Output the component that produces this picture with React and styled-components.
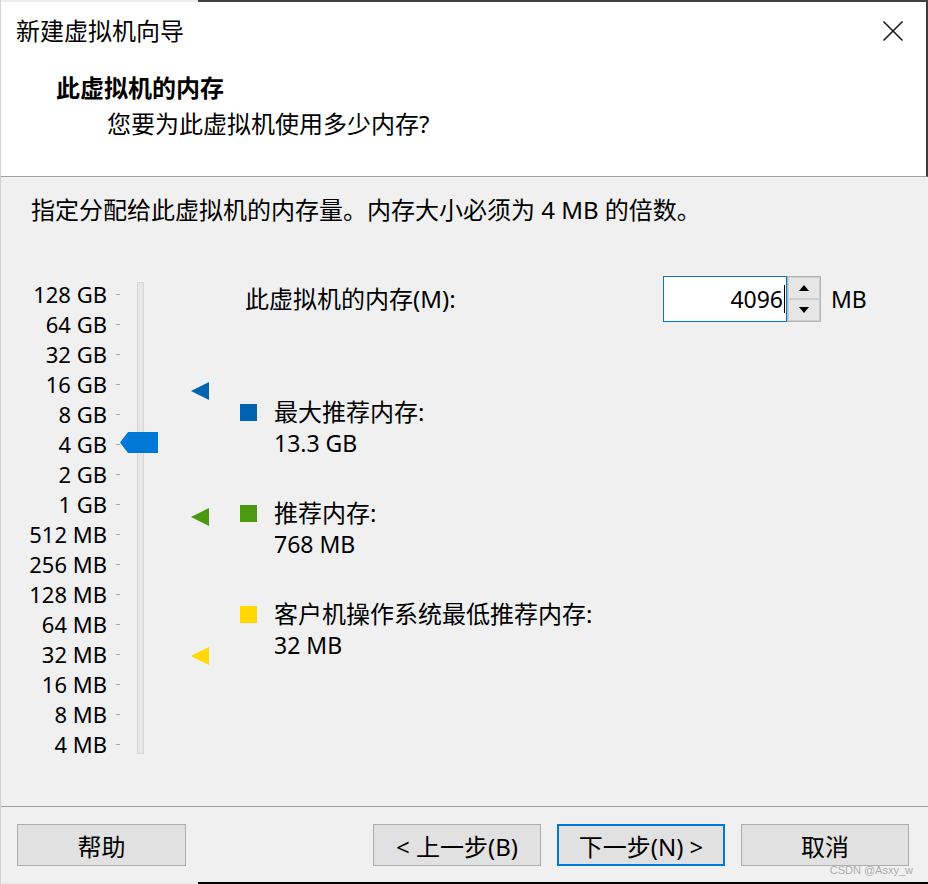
import React from "react";
import styled, { createGlobalStyle } from "styled-components";

const Global = createGlobalStyle`
  html, body { margin: 0; padding: 0; background: #f0f0f0; }
  body {
    font-family: "Noto Sans", "Noto Sans CJK SC", sans-serif;
    color: #000;
  }
`;

const Window = styled.div`
  position: relative;
  width: 928px;
  height: 884px;
  box-sizing: border-box;
  border-left: 1px solid #d2d2d2;
  background: #f0f0f0;
  display: flex;
  flex-direction: column;
  overflow: hidden;
`;

const EdgeStrip = styled.div`
  display: flex;
  height: 2px;
  flex: none;
`;

const EdgeLight = styled.div`
  width: 197px;
  background: #ececec;
`;

const EdgeDark = styled.div`
  flex: 1;
  background: ${(p) => p.$color};
`;

const Header = styled.header`
  height: 174px;
  flex: none;
  background: #fff;
  border-bottom: 1px solid #a0a0a0;
  border-right: 2px solid #3c3c3c;
  display: flex;
  flex-direction: column;
`;

const TitleBar = styled.div`
  height: 58px;
  display: flex;
  align-items: center;
  justify-content: space-between;
  padding: 0 21px 0 15px;
`;

const Title = styled.div`
  font-size: 24px;
  line-height: 30px;
`;

const CloseButton = styled.div`
  width: 24px;
  height: 24px;
  display: flex;
  align-items: center;
  justify-content: center;
`;

const Heading = styled.div`
  margin-top: 13px;
  padding-left: 55px;
  font-size: 24px;
  line-height: 30px;
  font-weight: 700;
`;

const SubHeading = styled.div`
  margin-top: 6px;
  padding-left: 106px;
  font-size: 24px;
  line-height: 30px;
`;

const Body = styled.main`
  height: 629px;
  flex: none;
  display: flex;
  flex-direction: column;
`;

const Intro = styled.div`
  margin-top: 18px;
  padding-left: 30px;
  font-size: 24px;
  line-height: 30px;
`;

const MainArea = styled.div`
  margin-top: 51px;
  display: flex;
  align-items: flex-start;
`;

const SliderArea = styled.div`
  position: relative;
  display: flex;
  align-items: flex-start;
  padding-top: 3px;
`;

const Labels = styled.div`
  width: 106px;
  display: flex;
  flex-direction: column;
  text-align: right;
`;

const ScaleLabel = styled.div`
  height: 30px;
  font-size: 22px;
  line-height: 30px;
  white-space: nowrap;
`;

const Ticks = styled.div`
  margin-left: 9px;
  width: 4px;
  display: flex;
  flex-direction: column;
`;

const TickRow = styled.div`
  height: 30px;
  display: flex;
  align-items: center;
`;

const Tick = styled.div`
  width: 4px;
  height: 1px;
  background: #a8a8a8;
`;

const Track = styled.div`
  margin-left: 17px;
  margin-top: 3px;
  width: 7px;
  height: 472px;
  box-sizing: border-box;
  background: #e7e7e7;
  border: 1px solid #d6d6d6;
`;

const Thumb = styled.svg`
  position: absolute;
  left: 119px;
  top: 156px;
`;

const Markers = styled.div`
  position: relative;
  margin-left: 47px;
  width: 18px;
  height: 480px;
`;

const Marker = styled.div`
  position: absolute;
  left: 0;
  width: 0;
  height: 0;
  border-top: 9px solid transparent;
  border-bottom: 9px solid transparent;
  border-right: 18px solid ${(p) => p.$color};
`;

const Details = styled.div`
  margin-left: 31px;
  display: flex;
  flex-direction: column;
`;

const MemoryRow = styled.div`
  height: 46px;
  display: flex;
  align-items: center;
`;

const MemLabel = styled.div`
  width: 423px;
  box-sizing: border-box;
  padding-left: 5px;
  font-size: 24px;
  line-height: 30px;
`;

const Input = styled.div`
  width: 124px;
  height: 46px;
  box-sizing: border-box;
  background: #fff;
  border: 1px solid #0078d7;
  display: flex;
  align-items: center;
  justify-content: flex-end;
  padding-right: 1px;
  font-size: 23px;
`;

const Caret = styled.span`
  display: inline-block;
  width: 1px;
  height: 28px;
  background: #000;
  margin-left: 1px;
`;

const Spinner = styled.div`
  width: 34px;
  height: 46px;
  display: flex;
  flex-direction: column;
  box-sizing: border-box;
  border: 1px solid #b4b4b4;
`;

const SpinButton = styled.div`
  flex: 1;
  display: flex;
  align-items: center;
  justify-content: center;
  background: #e6e6e6;
  border: 1px solid #cfcfcf;
  box-sizing: border-box;
`;

const Unit = styled.div`
  margin-left: 10px;
  font-size: 23px;
  line-height: 30px;
`;

const Legend = styled.div`
  margin-top: 75px;
  display: flex;
  flex-direction: column;
  gap: 39px;
`;

const LegendItem = styled.div`
  display: flex;
  flex-direction: column;
`;

const LegendHead = styled.div`
  display: flex;
  align-items: center;
  gap: 17px;
  height: 30px;
`;

const Square = styled.div`
  width: 17px;
  height: 17px;
  background: ${(p) => p.$color};
`;

const LegendLabel = styled.div`
  font-size: 24px;
  line-height: 30px;
`;

const LegendValue = styled.div`
  padding-left: 34px;
  font-size: 23px;
  line-height: 32px;
`;

const Footer = styled.footer`
  flex: none;
  border-top: 1px solid #a0a0a0;
  padding: 17px 19px 16px 16px;
  display: flex;
  gap: 16px;
`;

const Spacer = styled.div`
  flex: 1;
`;

const Button = styled.button`
  width: ${(p) => (p.$wide ? 169 : 168)}px;
  height: 42px;
  box-sizing: border-box;
  background: #e1e1e1;
  border: ${(p) => (p.$default ? "2px solid #0078d7" : "1px solid #adadad")};
  font-family: "Noto Sans", "Noto Sans CJK SC", sans-serif;
  font-size: 24px;
  color: #000;
  padding: 0;
  display: flex;
  align-items: center;
  justify-content: center;
`;

const Watermark = styled.div`
  position: absolute;
  right: 15px;
  bottom: 8px;
  font-family: "Liberation Sans", sans-serif;
  font-size: 11px;
  color: #a8a8a8;
  text-shadow: 0 0 1px #fff;
`;

const scale = [
  "128 GB", "64 GB", "32 GB", "16 GB", "8 GB", "4 GB", "2 GB", "1 GB",
  "512 MB", "256 MB", "128 MB", "64 MB", "32 MB", "16 MB", "8 MB", "4 MB",
];

const markers = [
  { color: "#0063b1", center: 112 },
  { color: "#4a990e", center: 238 },
  { color: "#ffd800", center: 377 },
];

const legend = [
  { color: "#0063b1", label: "最大推荐内存:", value: "13.3 GB" },
  { color: "#4a990e", label: "推荐内存:", value: "768 MB" },
  { color: "#ffd800", label: "客户机操作系统最低推荐内存:", value: "32 MB" },
];

export default function App() {
  return (
    <>
      <Global />
      <Window>
        <EdgeStrip>
          <EdgeLight />
          <EdgeDark $color="#404040" />
        </EdgeStrip>
        <Header>
          <TitleBar>
            <Title>新建虚拟机向导</Title>
            <CloseButton>
              <svg width="22" height="22" viewBox="0 0 22 22">
                <path d="M1.5 1.5 L20.5 20.5 M20.5 1.5 L1.5 20.5" stroke="#1a1a1a" strokeWidth="1.6" fill="none" />
              </svg>
            </CloseButton>
          </TitleBar>
          <Heading>此虚拟机的内存</Heading>
          <SubHeading>您要为此虚拟机使用多少内存?</SubHeading>
        </Header>
        <Body>
          <Intro>指定分配给此虚拟机的内存量。内存大小必须为 4 MB 的倍数。</Intro>
          <MainArea>
            <SliderArea>
              <Labels>
                {scale.map((s) => (
                  <ScaleLabel key={s}>{s}</ScaleLabel>
                ))}
              </Labels>
              <Ticks>
                {scale.map((s) => (
                  <TickRow key={s}>
                    <Tick />
                  </TickRow>
                ))}
              </Ticks>
              <Track />
              <Thumb width="38" height="21" viewBox="0 0 38 21">
                <polygon points="0,10.5 8,0 38,0 38,21 8,21" fill="#0078d7" />
              </Thumb>
              <Markers>
                {markers.map((m) => (
                  <Marker key={m.color} $color={m.color} style={{ top: m.center - 9 }} />
                ))}
              </Markers>
            </SliderArea>
            <Details>
              <MemoryRow>
                <MemLabel>此虚拟机的内存(M):</MemLabel>
                <Input>
                  4096
                  <Caret />
                </Input>
                <Spinner>
                  <SpinButton>
                    <svg width="10" height="6" viewBox="0 0 10 6">
                      <polygon points="0,6 5,0 10,6" fill="#000" />
                    </svg>
                  </SpinButton>
                  <SpinButton>
                    <svg width="10" height="6" viewBox="0 0 10 6">
                      <polygon points="0,0 10,0 5,6" fill="#000" />
                    </svg>
                  </SpinButton>
                </Spinner>
                <Unit>MB</Unit>
              </MemoryRow>
              <Legend>
                {legend.map((l) => (
                  <LegendItem key={l.label}>
                    <LegendHead>
                      <Square $color={l.color} />
                      <LegendLabel>{l.label}</LegendLabel>
                    </LegendHead>
                    <LegendValue>{l.value}</LegendValue>
                  </LegendItem>
                ))}
              </Legend>
            </Details>
          </MainArea>
        </Body>
        <Footer>
          <Button $wide>帮助</Button>
          <Spacer />
          <Button>&lt; 上一步(B)</Button>
          <Button $default>下一步(N) &gt;</Button>
          <Button>取消</Button>
        </Footer>
        <EdgeStrip>
          <EdgeLight />
          <EdgeDark $color="#000" />
        </EdgeStrip>
        <Watermark>CSDN @Asxy_w</Watermark>
      </Window>
    </>
  );
}
